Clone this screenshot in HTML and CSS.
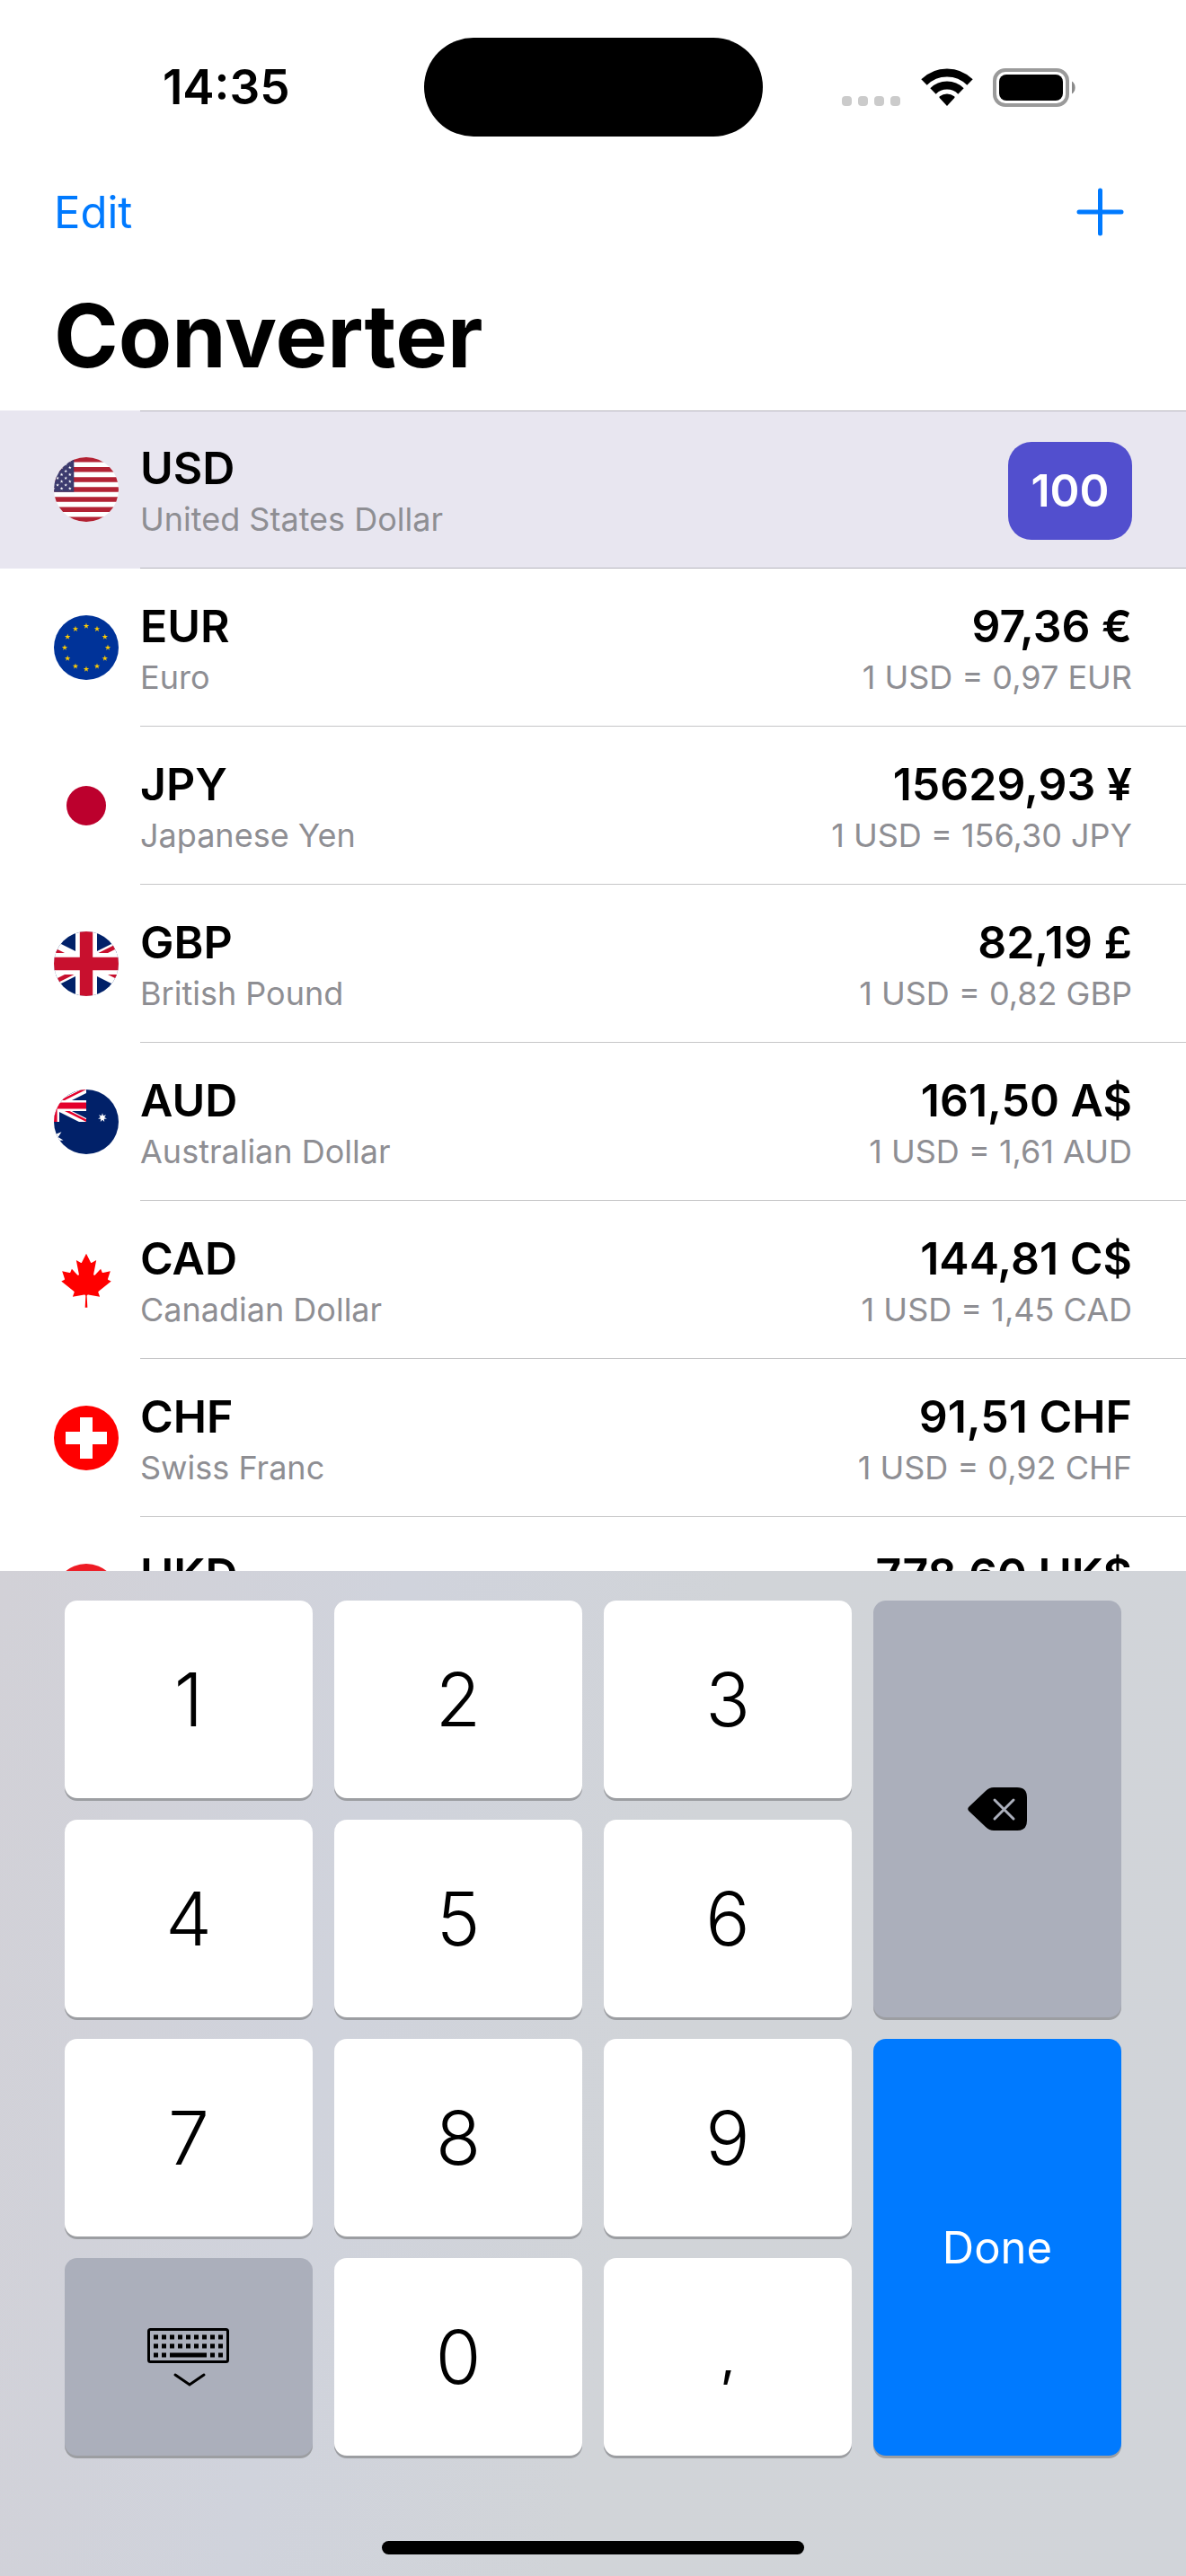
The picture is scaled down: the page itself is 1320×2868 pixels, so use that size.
FILE: index.html
```html
<!DOCTYPE html>
<html lang="en">
<head>
    <meta charset="UTF-8">
    <meta name="viewport" content="width=device-width, initial-scale=1.0">
    <title>Converter</title>
    <link rel="stylesheet" href="styles.css">
</head>
<body>
    <div class="status-bar">
        <span class="time">14:35</span>
        <div class="island"></div>
        <div class="status-icons">
            <svg width="66" height="42" viewBox="0 0 66 42" fill="#cbcbcb">
                <rect x="0" y="31" width="11" height="11" rx="4"/>
                <rect x="18" y="31" width="11" height="11" rx="4"/>
                <rect x="36" y="31" width="11" height="11" rx="4"/>
                <rect x="54" y="31" width="11" height="11" rx="4"/>
            </svg>
            <svg width="58" height="42" viewBox="0 0 58 42">
                <path d="M3.5 15.5a36 36 0 0 1 51 0" fill="none" stroke="#000" stroke-width="9"/>
                <path d="M13.5 25.5a22 22 0 0 1 31 0" fill="none" stroke="#000" stroke-width="9"/>
                <path d="M29 42l-8.300-9q-.8-1 .2-1.700a13 13 0 0 1 16.200 0q1 .7.2 1.700z"/>
            </svg>
            <svg width="94" height="43" viewBox="0 0 94 43">
                <rect x="2" y="2" width="81" height="39" rx="12" fill="none" stroke="#9a9a9a" stroke-width="4"/>
                <rect x="7" y="7" width="71" height="29" rx="8"/>
                <path d="M88 14.500a7 8 0 0 1 0 14z" fill="#8a8a8a"/>
            </svg>
        </div>
    </div>

    <div class="nav-bar">
        <button class="nav-button">Edit</button>
        <button class="nav-button" aria-label="Add currency">
            <svg width="62" height="54" viewBox="0 0 62 54">
                <path d="M26.500 3v48M3 27h47" stroke="#007aff" stroke-width="5" stroke-linecap="round"/>
            </svg>
        </button>
    </div>
    <h1>Converter</h1>

    <ul class="currencies">
        <li class="currency selected">
            <svg class="flag" viewBox="0 0 72 72">
                <defs>
                    <clipPath id="circle"><circle cx="36" cy="36" r="36"/></clipPath>
                    <path id="star" d="M0-1 .225-.309.951-.309.363.118.588.809 0 .382-.588.809-.363.118-.951-.309-.225-.309z"/>
                    <path id="star7" d="M0-1 .193-.401.782-.623.434-.099.975.223.348.277.434.901 0 .445-.434.901-.348.277-.975.223-.434-.099-.782-.623-.193-.401z"/>
                    <g id="stars5">
                        <use href="#star" transform="translate(0 3.900) scale(2)"/>
                        <use href="#star" transform="translate(0 11.600) scale(2)"/>
                        <use href="#star" transform="translate(0 19.400) scale(2)"/>
                        <use href="#star" transform="translate(0 27.100) scale(2)"/>
                        <use href="#star" transform="translate(0 34.900) scale(2)"/>
                    </g>
                    <g id="stars4">
                        <use href="#star" transform="translate(0 7.800) scale(2)"/>
                        <use href="#star" transform="translate(0 15.500) scale(2)"/>
                        <use href="#star" transform="translate(0 23.300) scale(2)"/>
                        <use href="#star" transform="translate(0 31) scale(2)"/>
                    </g>
                    <clipPath id="diagonals"><path d="M30 15h30v15zv15H0zH0V0zV0h30z"/></clipPath>
                    <clipPath id="jack-box"><path d="M0 0h60v30H0z"/></clipPath>
                </defs>
                <g clip-path="url(#circle)">
                    <path fill="#fff" d="M0 0h72v72H0z"/>
                    <path d="M0 2.770h72M0 13.850h72M0 24.920h72M0 36h72M0 47.080h72M0 58.150h72M0 69.230h72" stroke="#b22234" stroke-width="5.540"/>
                    <path fill="#3c3b6e" d="M0 0h22.300v38.800H0z"/>
                    <g fill="#fff">
                        <use href="#stars5" x="-.5"/>
                        <use href="#stars4" x="4.100"/>
                        <use href="#stars5" x="8.600"/>
                        <use href="#stars4" x="13.200"/>
                        <use href="#stars5" x="17.800"/>
                    </g>
                </g>
            </svg>
            <div class="details">
                <div class="names">
                    <label class="code" for="amount">USD</label>
                    <p class="note">United States Dollar</p>
                </div>
                <input id="amount" class="amount-input" type="text" inputmode="decimal" value="100">
            </div>
        </li>
        <li class="currency">
            <svg class="flag" viewBox="0 0 72 72">
                <circle cx="36" cy="36" r="36" fill="#039"/>
                <g fill="#fc0">
                    <use href="#star" transform="translate(36 12) scale(3.400)"/>
                    <use href="#star" transform="translate(48 15.200) scale(3.400)"/>
                    <use href="#star" transform="translate(56.800 24) scale(3.400)"/>
                    <use href="#star" transform="translate(60 36) scale(3.400)"/>
                    <use href="#star" transform="translate(56.800 48) scale(3.400)"/>
                    <use href="#star" transform="translate(48 56.800) scale(3.400)"/>
                    <use href="#star" transform="translate(36 60) scale(3.400)"/>
                    <use href="#star" transform="translate(24 56.800) scale(3.400)"/>
                    <use href="#star" transform="translate(15.200 48) scale(3.400)"/>
                    <use href="#star" transform="translate(12 36) scale(3.400)"/>
                    <use href="#star" transform="translate(15.200 24) scale(3.400)"/>
                    <use href="#star" transform="translate(24 15.200) scale(3.400)"/>
                </g>
            </svg>
            <div class="details">
                <div class="names">
                    <p class="code">EUR</p>
                    <p class="note">Euro</p>
                </div>
                <div class="values">
                    <p class="code">97,36 €</p>
                    <p class="note">1 USD = 0,97 EUR</p>
                </div>
            </div>
        </li>
        <li class="currency">
            <svg class="flag" viewBox="0 0 72 72">
                <circle cx="36" cy="36" r="36" fill="#fff"/>
                <circle cx="36" cy="36" r="22" fill="#bc002d"/>
            </svg>
            <div class="details">
                <div class="names">
                    <p class="code">JPY</p>
                    <p class="note">Japanese Yen</p>
                </div>
                <div class="values">
                    <p class="code">15629,93 ¥</p>
                    <p class="note">1 USD = 156,30 JPY</p>
                </div>
            </div>
        </li>
        <li class="currency">
            <svg class="flag" viewBox="0 0 72 72">
                <g clip-path="url(#circle)">
                    <g transform="translate(-36 0) scale(2.400)">
                        <path fill="#012169" d="M0 0h60v30H0z"/>
                        <path d="M0 0l60 30M60 0L0 30" stroke="#fff" stroke-width="6"/>
                        <path d="M0 0l60 30M60 0L0 30" stroke="#c8102e" stroke-width="4" clip-path="url(#diagonals)"/>
                        <path d="M30 0v30M0 15h60" stroke="#fff" stroke-width="10"/>
                        <path d="M30 0v30M0 15h60" stroke="#c8102e" stroke-width="6"/>
                    </g>
                </g>
            </svg>
            <div class="details">
                <div class="names">
                    <p class="code">GBP</p>
                    <p class="note">British Pound</p>
                </div>
                <div class="values">
                    <p class="code">82,19 £</p>
                    <p class="note">1 USD = 0,82 GBP</p>
                </div>
            </div>
        </li>
        <li class="currency">
            <svg class="flag" viewBox="0 0 72 72">
                <g clip-path="url(#circle)">
                    <path fill="#012169" d="M0 0h72v72H0z"/>
                    <g transform="translate(-36 0) scale(1.200)" clip-path="url(#jack-box)">
                        <path d="M0 0l60 30M60 0L0 30" stroke="#fff" stroke-width="6"/>
                        <path d="M0 0l60 30M60 0L0 30" stroke="#e4002b" stroke-width="4" clip-path="url(#diagonals)"/>
                        <path d="M30 0v30M0 15h60" stroke="#fff" stroke-width="10"/>
                        <path d="M30 0v30M0 15h60" stroke="#e4002b" stroke-width="6"/>
                    </g>
                    <use href="#star7" fill="#fff" transform="translate(0 54) scale(10.800)"/>
                    <use href="#star7" fill="#fff" transform="translate(54 31.400) scale(5.100)"/>
                </g>
            </svg>
            <div class="details">
                <div class="names">
                    <p class="code">AUD</p>
                    <p class="note">Australian Dollar</p>
                </div>
                <div class="values">
                    <p class="code">161,50 A$</p>
                    <p class="note">1 USD = 1,61 AUD</p>
                </div>
            </div>
        </li>
        <li class="currency">
            <svg class="flag" viewBox="0 0 72 72">
                <circle cx="36" cy="36" r="36" fill="#fff"/>
                <path fill="#f00" transform="translate(36 36.500) scale(.0149)" d="m-90 2030 45-863a95 95 0 0 0-111-98l-859 151 116-320a65 65 0 0 0-20-73l-941-762 212-99a65 65 0 0 0 34-79l-186-572 542 115a65 65 0 0 0 73-38l105-247 423 454a65 65 0 0 0 111-57l-204-1052 327 189a65 65 0 0 0 91-27l332-652 332 652a65 65 0 0 0 91 27l327-189-204 1052a65 65 0 0 0 111 57l423-454 105 247a65 65 0 0 0 73 38l542-115-186 572a65 65 0 0 0 34 79l212 99-941 762a65 65 0 0 0-20 73l116 320-859-151a95 95 0 0 0-111 98l45 863z"/>
            </svg>
            <div class="details">
                <div class="names">
                    <p class="code">CAD</p>
                    <p class="note">Canadian Dollar</p>
                </div>
                <div class="values">
                    <p class="code">144,81 C$</p>
                    <p class="note">1 USD = 1,45 CAD</p>
                </div>
            </div>
        </li>
        <li class="currency">
            <svg class="flag" viewBox="0 0 72 72">
                <circle cx="36" cy="36" r="36" fill="#f00"/>
                <path d="M36 13v46M13 36h46" stroke="#fff" stroke-width="14"/>
            </svg>
            <div class="details">
                <div class="names">
                    <p class="code">CHF</p>
                    <p class="note">Swiss Franc</p>
                </div>
                <div class="values">
                    <p class="code">91,51 CHF</p>
                    <p class="note">1 USD = 0,92 CHF</p>
                </div>
            </div>
        </li>
        <li class="currency">
            <svg class="flag" viewBox="0 0 72 72">
                <circle cx="36" cy="36" r="36" fill="#ee1c25"/>
            </svg>
            <div class="details">
                <div class="names">
                    <p class="code">HKD</p>
                </div>
                <div class="values">
                    <p class="code">778,60 HK$</p>
                </div>
            </div>
        </li>
    </ul>

    <div class="keyboard">
        <div class="keys">
            <button class="key">1</button>
            <button class="key">2</button>
            <button class="key">3</button>
            <button class="key dark tall" aria-label="Delete">
                <svg width="66" height="48" viewBox="0 0 66 48">
                    <path d="M1.500 21.500L20 4Q24 0 29 0h26q11 0 11 11v26q0 11-11 11H29q-5 0-9-4L1.500 26.500q-2.500-2.500 0-5z"/>
                    <path d="M30 14l21 21M51 14L30 35" stroke="#abafbb" stroke-width="3" stroke-linecap="round"/>
                </svg>
            </button>
            <button class="key">4</button>
            <button class="key">5</button>
            <button class="key">6</button>
            <button class="key">7</button>
            <button class="key">8</button>
            <button class="key">9</button>
            <button class="key done tall">Done</button>
            <button class="key dark" aria-label="Hide keyboard">
                <svg width="92" height="65" viewBox="0 0 92 65" fill="none" stroke="#000">
                    <rect x="1.500" y="1.500" width="88" height="36" rx="2" stroke-width="3"/>
                    <path d="M7 10h78M7 20h78" stroke-width="5" stroke-dasharray="5 4"/>
                    <path d="M7 30h14M70 30h15" stroke-width="5" stroke-dasharray="5 4"/>
                    <path d="M25 30h41" stroke-width="5"/>
                    <path d="M31 52l16 11 16-11" stroke-width="3" stroke-linecap="round"/>
                </svg>
            </button>
            <button class="key">0</button>
            <button class="key comma">,</button>
        </div>
        <div class="home-indicator"></div>
    </div>
</body>
</html>
```

FILE: styles.css
```css
* {
    box-sizing: border-box;
}
body {
    font-family: Inter, "Liberation Sans", sans-serif;
    background: white;
    color: black;
    margin: 0;
    height: 100vh;
    display: flex;
    flex-direction: column;
    overflow: hidden;
}
h1, p, ul {
    margin: 0;
    padding: 0;
}
button, input {
    font-family: inherit;
    border: none;
    padding: 0;
}
svg {
    display: block;
}

.status-bar {
    flex: none;
    height: 170px;
    padding: 24px 32px 0;
    display: grid;
    grid-template-columns: 1fr auto 1fr;
    align-items: center;
    justify-items: center;
}
.time {
    font-size: 53px;
    font-weight: 600;
}
.island {
    width: 377px;
    height: 110px;
    border-radius: 55px;
    background: black;
}
.status-icons {
    display: flex;
    gap: 22px;
}

.nav-bar {
    flex: none;
    height: 132px;
    padding: 0 60px;
    display: flex;
    justify-content: space-between;
    align-items: center;
}
.nav-button {
    background: none;
    color: #007aff;
    font-size: 49px;
    cursor: pointer;
}
h1 {
    flex: none;
    padding: 12px 60px 23px;
    font-size: 97px;
    font-weight: 700;
    line-height: 120px;
}

.currencies {
    flex: 1;
    min-height: 0;
    overflow: hidden;
    list-style: none;
}
.currency {
    height: 176px;
    padding-left: 60px;
    display: flex;
    align-items: center;
    gap: 24px;
}
.flag {
    flex: none;
    width: 72px;
    height: 72px;
}
.details {
    flex: 1;
    height: 176px;
    padding: 32px 60px 29px 0;
    border-bottom: 1px solid #c6c6c8;
    display: flex;
    justify-content: space-between;
}
.selected {
    background: #e8e6f0;
}
.selected .details {
    border-top: 1px solid #b5b4bc;
    border-bottom-color: #b5b4bc;
    padding-top: 31px;
}
.values {
    text-align: right;
}
.code {
    display: block;
    font-size: 50px;
    font-weight: 600;
    line-height: 64px;
}
.note {
    color: #8e8e93;
    font-size: 36px;
    line-height: 50px;
}
.amount-input {
    align-self: center;
    width: 138px;
    height: 109px;
    border-radius: 26px;
    background: #524fce;
    color: white;
    font-size: 50px;
    font-weight: 600;
    text-align: center;
}

.keyboard {
    flex: none;
    padding: 33px 72px 24px;
    background: linear-gradient(100deg, #d2d1d7, #d0d3dc 30%, #d1d4d8 55%, #d1d4d9);
}
.keys {
    display: grid;
    grid-template-columns: repeat(4, 1fr);
    grid-auto-rows: 220px;
    gap: 24px;
}
.key {
    display: flex;
    align-items: center;
    justify-content: center;
    border-radius: 14px;
    background: white;
    color: black;
    box-shadow: 0 3px 0 #9c9ea2;
    font-size: 82px;
    font-weight: 300;
    cursor: pointer;
}
.tall {
    grid-row: span 2;
}
.dark {
    background: #abafbb;
}
.done {
    background: #007aff;
    color: white;
    font-size: 49px;
    font-weight: 400;
}
.comma {
    font-size: 58px;
    font-weight: 400;
}
.home-indicator {
    width: 40%;
    max-width: 470px;
    height: 15px;
    margin: 95px auto 0;
    border-radius: 8px;
    background: black;
}
```
